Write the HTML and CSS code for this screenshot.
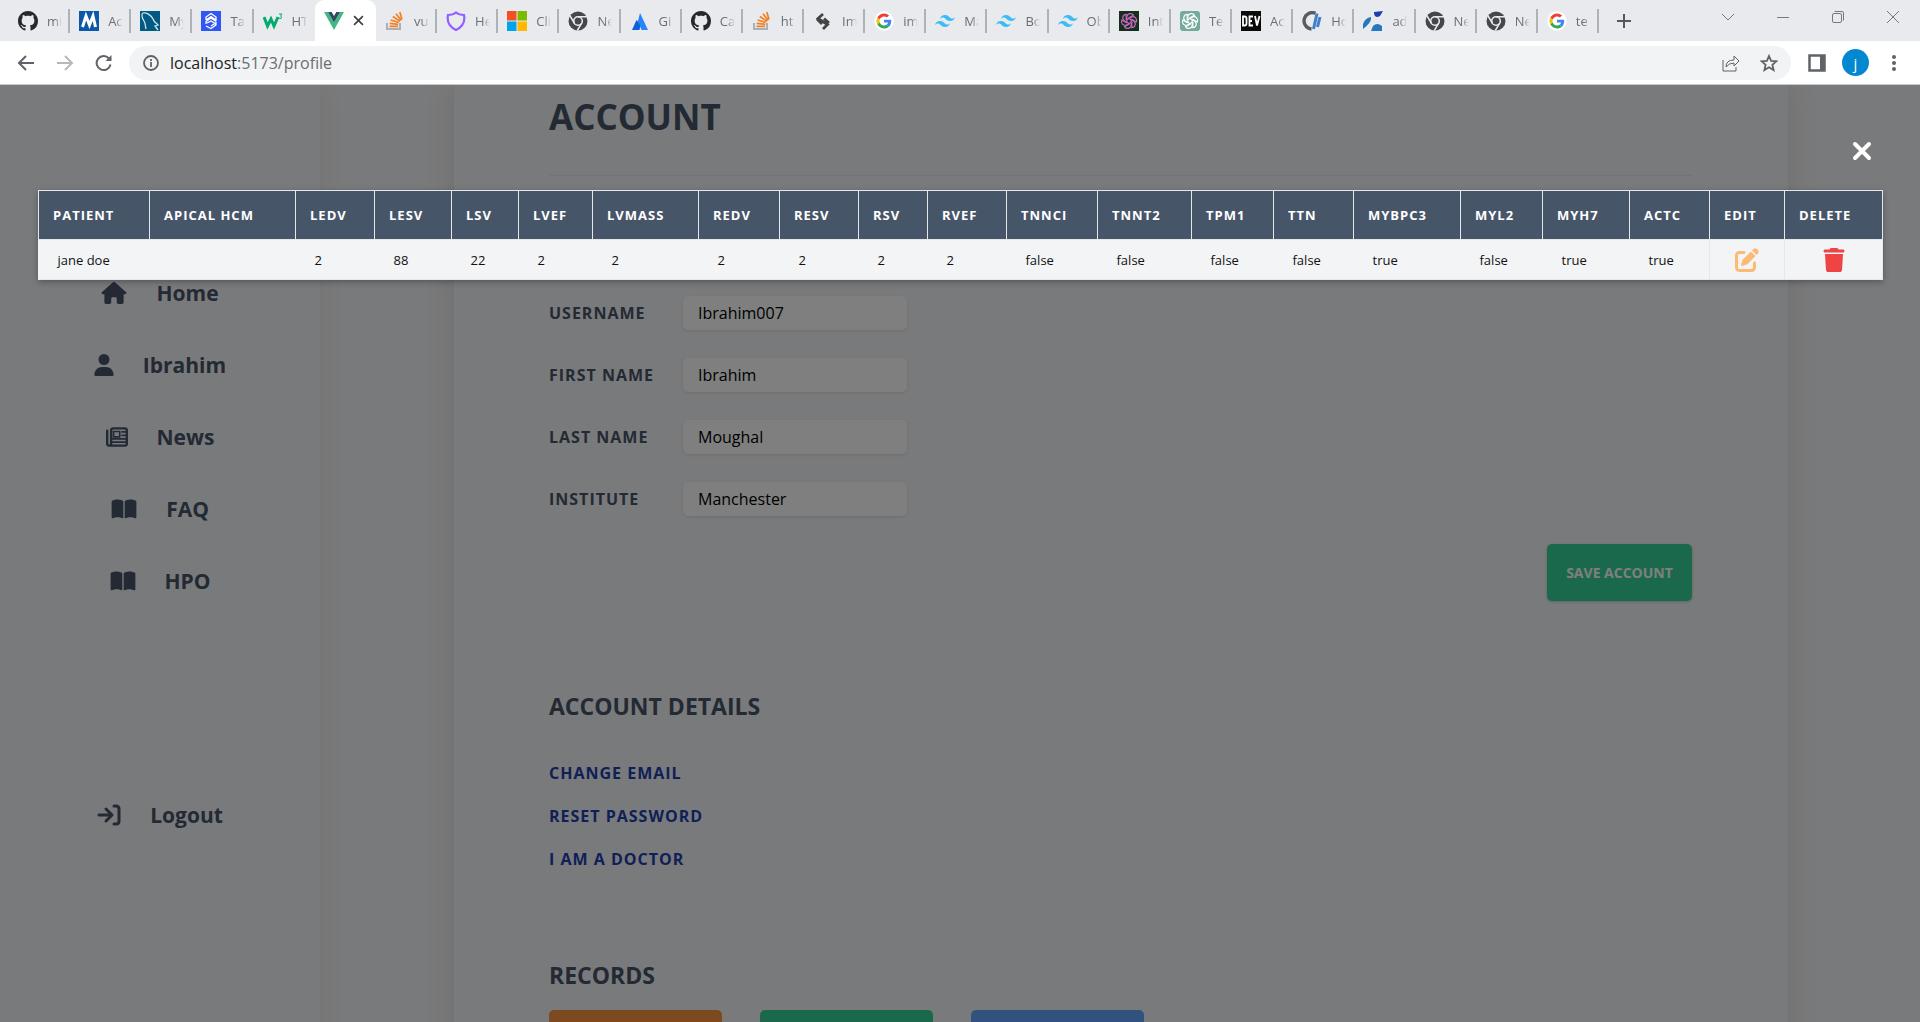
FILE: index.html
```html
<!DOCTYPE html>
<html lang="en">
<head>
<meta charset="utf-8">
<title>Profile</title>
<link rel="stylesheet" href="styles.css">
</head>
<body>
<svg class="sprite" aria-hidden="true">
  <symbol id="github" viewBox="0 0 16 16"><path fill="#24292f" d="M8 0C3.58 0 0 3.58 0 8c0 3.54 2.29 6.53 5.47 7.59.4.07.55-.17.55-.38 0-.19-.01-.82-.01-1.49-2.01.37-2.53-.49-2.69-.94-.09-.23-.48-.94-.82-1.13-.28-.15-.68-.52-.01-.53.63-.01 1.08.58 1.23.82.72 1.21 1.87.87 2.33.66.07-.52.28-.87.51-1.07-1.78-.2-3.64-.89-3.64-3.95 0-.87.31-1.59.82-2.15-.08-.2-.36-1.02.08-2.12 0 0 .67-.21 2.2.82.64-.18 1.32-.27 2-.27s1.36.09 2 .27c1.53-1.04 2.2-.82 2.2-.82.44 1.1.16 1.92.08 2.12.51.56.82 1.27.82 2.15 0 3.07-1.87 3.75-3.65 3.95.29.25.54.73.54 1.48 0 1.07-.01 1.93-.01 2.2 0 .21.15.46.55.38A8.01 8.01 0 0 0 16 8c0-4.42-3.58-8-8-8z"/></symbol>
  <symbol id="stack" viewBox="0 0 20 20"><path d="M2 12v6h13v-6" fill="none" stroke="#a9b0b6" stroke-width="2"/><g stroke="#f48024" stroke-width="1.7"><path d="M4.5 15.3h8.500M4.700 12.300l8.500 1M5.600 9l8.200 2.500M7.800 5.500l7.200 4.700M11 2.800l5.200 6.600M14.800 1l2.200 7.500"/></g></symbol>
  <symbol id="chrome" viewBox="0 0 20 20"><circle cx="10" cy="10" r="9.500" fill="#45484b"/><circle cx="10" cy="10" r="4.300" fill="none" stroke="#e8eaed" stroke-width="1.600"/><path d="M10 5.700h9M6.300 12.100L1.800 4.500M13.700 12.100L9.300 19.500" stroke="#e8eaed" stroke-width="1.500"/></symbol>
  <symbol id="tailwind" viewBox="0 0 24 24"><path fill="#38bdf8" d="M12 4.800c-3.200 0-5.200 1.600-6 4.800 1.200-1.600 2.600-2.200 4.200-1.800.913.228 1.565.89 2.288 1.624C13.666 10.618 15.027 12 18 12c3.200 0 5.200-1.600 6-4.800-1.200 1.600-2.600 2.200-4.200 1.800-.913-.228-1.565-.89-2.288-1.624C16.337 6.182 14.976 4.800 12 4.800zM6 12c-3.200 0-5.200 1.600-6 4.800 1.200-1.600 2.600-2.200 4.200-1.800.913.228 1.565.89 2.288 1.624C7.666 17.818 9.027 19.200 12 19.200c3.200 0 5.200-1.600 6-4.800-1.200 1.600-2.600 2.200-4.200 1.800-.913-.228-1.565-.89-2.288-1.624C10.337 13.382 8.976 12 6 12z"/></symbol>
  <symbol id="google" viewBox="-8 -8 64 64"><circle cx="24" cy="24" r="31" fill="#fff"/><path fill="#ea4335" d="M24 9.500c3.540 0 6.710 1.220 9.210 3.600l6.850-6.850C35.900 2.380 30.470 0 24 0 14.620 0 6.510 5.380 2.560 13.220l7.980 6.190C12.430 13.720 17.740 9.500 24 9.500z"/><path fill="#4285f4" d="M46.980 24.550c0-1.570-.15-3.090-.38-4.550H24v9.020h12.940c-.58 2.960-2.260 5.480-4.780 7.180l7.730 6c4.510-4.180 7.090-10.360 7.090-17.650z"/><path fill="#fbbc05" d="M10.530 28.590c-.48-1.450-.76-2.990-.76-4.590s.27-3.140.76-4.590l-7.980-6.190C.92 16.460 0 20.120 0 24c0 3.880.92 7.540 2.560 10.780l7.970-6.190z"/><path fill="#34a853" d="M24 48c6.480 0 11.930-2.130 15.890-5.810l-7.730-6c-2.150 1.450-4.920 2.300-8.160 2.300-6.260 0-11.570-4.220-13.470-9.910l-7.980 6.190C6.510 42.620 14.620 48 24 48z"/></symbol>
  <symbol id="knot" viewBox="-10 -10 20 20"><g fill="none" stroke="currentColor" stroke-width="1.200"><path id="k" d="M-2.200 1.300V-4.200A3.600 3.600 0 0 1 4.400 -5.800L-.5 -3"/><use href="#k" transform="rotate(60)"/><use href="#k" transform="rotate(120)"/><use href="#k" transform="rotate(180)"/><use href="#k" transform="rotate(240)"/><use href="#k" transform="rotate(300)"/></g></symbol>
  <symbol id="book" viewBox="0 0 576 512"><path fill="currentColor" d="M249.600 471.500c10.800 3.800 22.400-4.100 22.400-15.500V78.600c0-4.200-1.600-8.400-5-11C247.400 52 202.400 32 144 32 93.500 32 46.300 45.300 18.100 56.100 6.800 60.500 0 71.700 0 83.800v370.300c0 11.900 12.800 20.200 24.100 16.500C55.600 460.100 105.500 448 144 448c33.900 0 79 14 105.600 23.500zm76.800 0C353 462 398.100 448 432 448c38.500 0 88.400 12.100 119.900 22.600 11.300 3.800 24.100-4.600 24.100-16.500V83.800c0-12.100-6.800-23.300-18.100-27.600C529.700 45.300 482.500 32 432 32c-58.400 0-103.400 20-123 35.600-3.300 2.600-5 6.800-5 11V456c0 11.400 11.700 19.300 22.400 15.500z"/></symbol>
</svg>

<header class="browser">
  <div class="tabstrip">
    <div class="tabs" role="tablist">
      <button class="tab" role="tab"><svg class="fav"><use href="#github"/></svg><span>mi</span></button>
      <button class="tab" role="tab"><svg class="fav" viewBox="0 0 20 20"><path fill="#0b57a8" d="M0 0h20v20H0z"/><path d="M3.500 16L7 5l3.500 9L14 5l2.500 11" fill="none" stroke="#fff" stroke-width="3"/></svg><span>Ac</span></button>
      <button class="tab" role="tab"><svg class="fav" viewBox="0 0 20 20"><path fill="#015a84" d="M0 0h20v20H0z"/><path d="M6 18c-1-3 0-5-2-8S1 3 3 2c3-1 8 2 10 6 1 3 3 4 5 6l-3 1 3 4" fill="none" stroke="#d3e3ea" stroke-width="1.300"/></svg><span>My</span></button>
      <button class="tab" role="tab"><svg class="fav" viewBox="0 0 20 20"><path fill="#3056f5" d="M0 0h20v20H0z"/><path d="M5 9V6l5-3.500L15 6v3l-5-3.500L5 9M5 13v-2.500L10 7l5 3.500M15 11v3l-5 3.500L5 15M6 12l4-2 4 2.500-4 2.500" fill="none" stroke="#fff" stroke-width="1.300"/></svg><span>Ta</span></button>
      <button class="tab tab-before" role="tab"><svg class="fav" viewBox="0 0 20 20"><path d="M1 6l3.500 9L8 8l3 7 4-9" fill="none" stroke="#04aa6d" stroke-width="3"/><path d="M16 3h3l-1.500 2Q19.500 6 18 7.500l-2-.3" fill="none" stroke="#04aa6d"/></svg><span>HT</span></button>
      <button class="tab active" role="tab" aria-selected="true"><svg class="fav" viewBox="0 0 20 20"><path fill="#41b883" d="M0 1h4l6 10.500L16 1h4L10 19z"/><path fill="#34495e" d="M4 1h3.700L10 5l2.300-4H16L10 11.500z"/></svg><svg class="tab-close" viewBox="0 0 10 10"><path d="M1 1l8 8M9 1L1 9" stroke="#3c4043" stroke-width="1.500"/></svg></button>
      <button class="tab" role="tab"><svg class="fav"><use href="#stack"/></svg><span>vu</span></button>
      <button class="tab" role="tab"><svg class="fav" viewBox="0 0 20 20"><path d="M10 1.500q3 2.500 8 2.500 2 10-8 15Q0 14 2 4q5 0 8-2.500z" fill="none" stroke="#9360ff" stroke-width="2.200"/></svg><span>He</span></button>
      <button class="tab" role="tab"><svg class="fav" viewBox="0 0 20 20"><path fill="#f25022" d="M0 0h9.500v9.500H0z"/><path fill="#7fba00" d="M10.500 0H20v9.500h-9.500z"/><path fill="#00a4ef" d="M0 10.500h9.500V20H0z"/><path fill="#ffb900" d="M10.500 10.500H20V20h-9.500z"/></svg><span>Cli</span></button>
      <button class="tab" role="tab"><svg class="fav"><use href="#chrome"/></svg><span>Ne</span></button>
      <button class="tab" role="tab"><svg class="fav" viewBox="0 0 20 20"><path fill="#2684ff" d="M10 2l8 17h-6.500L8 10z"/><path fill="#0f5fd7" d="M6.500 9q5 4 3 10H2z"/></svg><span>Gi</span></button>
      <button class="tab" role="tab"><svg class="fav"><use href="#github"/></svg><span>Ca</span></button>
      <button class="tab" role="tab"><svg class="fav"><use href="#stack"/></svg><span>ht</span></button>
      <button class="tab" role="tab"><svg class="fav" viewBox="0 0 20 20"><path d="M10 3L5 7.500l9.500 6L10 18M4 8l5 5M11 7.500l5 4.500" fill="none" stroke="#444" stroke-width="2.800"/></svg><span>Im</span></button>
      <button class="tab" role="tab"><svg class="fav"><use href="#google"/></svg><span>im</span></button>
      <button class="tab" role="tab"><svg class="fav"><use href="#tailwind"/></svg><span>Ma</span></button>
      <button class="tab" role="tab"><svg class="fav"><use href="#tailwind"/></svg><span>Bo</span></button>
      <button class="tab" role="tab"><svg class="fav"><use href="#tailwind"/></svg><span>Ob</span></button>
      <button class="tab" role="tab"><svg class="fav fav-dark"><use href="#knot"/></svg><span>Int</span></button>
      <button class="tab" role="tab"><svg class="fav fav-mint"><use href="#knot"/></svg><span>Te</span></button>
      <button class="tab" role="tab"><svg class="fav" viewBox="0 0 20 20"><path fill="#0a0a0a" d="M0 0h20v20H0z"/><path d="M2 5.500v9h1.500q2 0 2-2v-5q0-2-2-2zM12 5.500H8.500v9H12M8.500 10H11M14 5l2 9.500L18.500 5" fill="none" stroke="#fff" stroke-width="1.800"/></svg><span>Ac</span></button>
      <button class="tab" role="tab"><svg class="fav" viewBox="0 0 20 20"><path d="M13.500 2.300A8.200 8.200 0 1 0 9.500 18" fill="none" stroke="#5b5b5f" stroke-width="3.400"/><path d="M15 2.500L11.500 18M18 6l-2.500 10" stroke="#3f7fca" stroke-width="3"/></svg><span>Ho</span></button>
      <button class="tab" role="tab"><svg class="fav" viewBox="0 0 20 20"><path fill="#1d3fae" d="M11 1l9-1-3 5q-6 3-6-4z"/><path fill="#2577be" d="M8 6q1 5-8 12V13q2-6 8-7zM10 15q4-4 9 0v5H8z"/></svg><span>ad</span></button>
      <button class="tab" role="tab"><svg class="fav"><use href="#chrome"/></svg><span>Ne</span></button>
      <button class="tab" role="tab"><svg class="fav"><use href="#chrome"/></svg><span>Ne</span></button>
      <button class="tab" role="tab"><svg class="fav"><use href="#google"/></svg><span>te</span></button>
    </div>
    <div class="window-bar">
      <button class="new-tab" aria-label="New tab"><svg width="14" height="14"><path d="M7 0v14M0 7h14" stroke="#55585c" stroke-width="2"/></svg></button>
      <div class="window-controls">
        <button aria-label="Search tabs"><svg viewBox="0 0 12 12"><path d="M0 3l6 6 6-6"/></svg></button>
        <button aria-label="Minimize"><svg viewBox="0 0 12 12"><path d="M0 6.500h12"/></svg></button>
        <button aria-label="Restore"><svg viewBox="0 0 12 12"><rect x=".5" y="2.500" width="9" height="9" rx="1.500"/><path d="M2.500.5H10q1.500 0 1.500 1.500v7.500"/></svg></button>
        <button aria-label="Close"><svg viewBox="0 0 12 12"><path d="M0 0l12 12M12 0L0 12"/></svg></button>
      </div>
    </div>
  </div>
  <div class="toolbar">
    <div class="nav-buttons">
      <button aria-label="Back"><svg viewBox="0 0 18 18"><path d="M17 9H2M9 2L2 9l7 7"/></svg></button>
      <button class="off" aria-label="Forward"><svg viewBox="0 0 18 18"><path d="M1 9h15M9 2l7 7-7 7"/></svg></button>
      <button aria-label="Reload"><svg viewBox="0 0 18 18"><path d="M15.500 10.500A7 7 0 1 1 14 4.500l1.500 1.500"/><path d="M16.500 1v6h-6z" class="solid"/></svg></button>
    </div>
    <div class="omnibox">
      <svg class="info" viewBox="0 0 16 16"><circle cx="8" cy="8" r="7" fill="none" stroke="#5f6368" stroke-width="1.800"/><path d="M8 7v5M8 4v2" stroke="#5f6368" stroke-width="1.800"/></svg>
      <div class="url"><b>localhost</b>:5173/profile</div>
      <button aria-label="Share"><svg viewBox="0 0 18 18"><path d="M1 6v11h13v-4M4 13q0-7 8-7V2l5 5-5 5V9q-5 0-8 4z"/></svg></button>
      <button aria-label="Bookmark"><svg viewBox="0 0 18 18"><path d="M9 2l2.100 4.900 5.300.4-4 3.500 1.200 5.200L9 13.200 4.400 16l1.200-5.200-4-3.500 5.300-.4z" stroke-width="1.800"/></svg></button>
    </div>
    <div class="tool-end">
      <button aria-label="Side panel"><svg viewBox="0 0 18 18"><path d="M1.500 1.500h15v15h-15z" stroke-width="2.500"/><path class="solid" d="M12 1h5v16h-5z"/></svg></button>
      <button class="avatar">j</button>
      <button aria-label="Menu"><svg viewBox="0 0 18 18"><g class="solid"><circle cx="9" cy="3" r="2"/><circle cx="9" cy="9" r="2"/><circle cx="9" cy="15" r="2"/></g></svg></button>
    </div>
  </div>
</header>

<div class="viewport">
  <div class="page">
    <nav class="sidebar">
      <a href="#"><svg class="w26" viewBox="0 0 576 512"><path fill="currentColor" d="M575.800 255.500c0 18-15 32.100-32 32.100h-32l.7 160.200c0 2.700-.2 5.400-.5 8.100V472c0 22.100-17.900 40-40 40h-80c-22.100 0-40-17.900-40-40v-88c0-17.700-14.300-32-32-32h-64c-17.700 0-32 14.300-32 32v88c0 22.100-17.900 40-40 40h-80c-22.100 0-40-17.900-40-40V287.600H32c-18 0-32-14-32-32.100 0-9 3-17 10-24L266.400 8c7-7 15-8 22-8s15 2 21 7l255.400 224.500c8 7 12 15 11 24z"/></svg>Home</a>
      <a href="#"><svg class="w20" viewBox="0 0 448 512"><path fill="currentColor" d="M224 256a128 128 0 1 0 0-256 128 128 0 1 0 0 256zm-45.700 48C79.800 304 0 383.800 0 482.300 0 498.700 13.300 512 29.700 512h388.600c16.400 0 29.700-13.300 29.700-29.700 0-98.500-79.800-178.300-178.300-178.300h-91.400z"/></svg>Ibrahim</a>
      <a href="#"><svg class="w22" viewBox="0 0 512 512"><g fill="none" stroke="currentColor" stroke-width="56" stroke-linecap="round"><path d="M28 112v296q0 48 48 48h360q48 0 48-48V104q0-48-48-48H168q-48 0-48 48v304q0 48-48 48"/><path d="M176 128h144v124H176zM372 138h80M372 218h80M150 300h310M150 376h310" stroke-width="38"/></g></svg>News</a>
      <a href="#"><svg class="w26"><use href="#book"/></svg>FAQ</a>
      <a href="#"><svg class="w26"><use href="#book"/></svg>HPO</a>
      <a href="#" class="logout"><svg class="w24" viewBox="0 0 24 22"><path d="M2 11h12M9 5l6 6-6 6M17 2h2q3 0 3 3v12q0 3-3 3h-2" fill="none" stroke="currentColor" stroke-width="3" stroke-linecap="round" stroke-linejoin="round"/></svg>Logout</a>
    </nav>
    <main class="card">
      <h1>ACCOUNT</h1>
      <form class="account">
        <label for="user">USERNAME</label><input id="user" value="Ibrahim007">
        <label for="first">FIRST NAME</label><input id="first" value="Ibrahim">
        <label for="last">LAST NAME</label><input id="last" value="Moughal">
        <label for="inst">INSTITUTE</label><input id="inst" value="Manchester">
        <button class="save" type="button">SAVE ACCOUNT</button>
      </form>
      <h2>ACCOUNT DETAILS</h2>
      <div class="links">
        <a href="#">CHANGE EMAIL</a>
        <a href="#">RESET PASSWORD</a>
        <a href="#">I AM A DOCTOR</a>
      </div>
      <h2>RECORDS</h2>
      <div class="records">
        <button class="orange" aria-label="Add record"></button>
        <button class="green" aria-label="View records"></button>
        <button class="blue" aria-label="Export records"></button>
      </div>
    </main>
  </div>

  <div class="overlay" role="dialog" aria-label="Patient records">
    <button class="dismiss" aria-label="Close"><svg viewBox="0 0 20 20"><path d="M3 3l14 14M17 3L3 17" stroke="#fff" stroke-width="4" stroke-linecap="round"/></svg></button>
    <table>
      <colgroup><col class="c111"><col class="c146"><col class="c79"><col class="c77"><col class="c67"><col class="c74"><col class="c106"><col class="c81"><col class="c79"><col class="c69"><col class="c79"><col class="c91"><col class="c94"><col class="c82"><col class="c80"><col class="c107"><col class="c82"><col class="c87"><col class="c80"><col class="c75"><col class="c98"></colgroup>
      <thead><tr><th>PATIENT</th><th>APICAL HCM</th><th>LEDV</th><th>LESV</th><th>LSV</th><th>LVEF</th><th>LVMASS</th><th>REDV</th><th>RESV</th><th>RSV</th><th>RVEF</th><th>TNNCI</th><th>TNNT2</th><th>TPM1</th><th>TTN</th><th>MYBPC3</th><th>MYL2</th><th>MYH7</th><th>ACTC</th><th>EDIT</th><th>DELETE</th></tr></thead>
      <tbody><tr><td>jane doe</td><td></td><td>2</td><td>88</td><td>22</td><td>2</td><td>2</td><td>2</td><td>2</td><td>2</td><td>2</td><td>false</td><td>false</td><td>false</td><td>false</td><td>true</td><td>false</td><td>true</td><td>true</td>
        <td class="action"><button aria-label="Edit"><svg viewBox="0 0 512 512"><path fill="#fdba74" d="M471.600 21.700c-21.900-21.900-57.300-21.900-79.200 0l-30.100 30 97.900 97.900 30.100-30.100c21.900-21.900 21.900-57.300 0-79.200l-18.700-18.600zm-299.200 220c-6.100 6.100-10.800 13.600-13.500 21.900l-29.600 88.800c-2.900 8.600-.6 18.100 5.800 24.600s15.900 8.700 24.600 5.800l88.800-29.600c8.200-2.700 15.700-7.400 21.900-13.500l167.300-167.400-98-98-167.300 167.400zM96 64c-53 0-96 43-96 96v256c0 53 43 96 96 96h256c53 0 96-43 96-96v-96c0-17.700-14.300-32-32-32s-32 14.300-32 32v96c0 17.700-14.300 32-32 32H96c-17.700 0-32-14.300-32-32V160c0-17.700 14.300-32 32-32h96c17.700 0 32-14.300 32-32s-14.300-32-32-32H96z"/></svg></button></td>
        <td class="action"><button aria-label="Delete"><svg viewBox="0 0 448 512"><path fill="#ef4444" d="M135.200 17.700L128 32H32C14.300 32 0 46.300 0 64s14.300 32 32 32h384c17.700 0 32-14.300 32-32s-14.300-32-32-32h-96l-7.200-14.300C307.400 6.800 296.300 0 284.200 0H163.800c-12.100 0-23.200 6.800-28.600 17.700zM416 128H32l21.200 339c1.600 25.300 22.600 45 47.900 45h245.800c25.300 0 46.300-19.700 47.900-45L416 128z"/></svg></button></td></tr></tbody>
    </table>
  </div>
</div>
</body>
</html>
```

FILE: styles.css
```css
* { box-sizing: border-box; }
body {
  margin: 0;
  height: 100vh;
  display: flex;
  flex-direction: column;
  font-family: "Open Sans", "Noto Sans", sans-serif;
  color: #475569;
}
button { border: 0; padding: 0; background: none; font: inherit; color: inherit; }
svg { display: block; flex: none; }
a { color: inherit; text-decoration: none; }
.sprite { position: absolute; width: 0; height: 0; }

/* Browser frame */
.browser { flex: none; border-bottom: 1px solid #c9cacc; background: #fff; }
.tabstrip { display: flex; height: 41px; padding-left: 9px; background: #e8eaed; }
.tabs { flex: 1; display: grid; grid-template-columns: repeat(26, minmax(0, 1fr)); }
.tab {
  display: flex;
  align-items: center;
  gap: 9px;
  padding-left: 9px;
  background: linear-gradient(#aeb1b5, #aeb1b5) right 9px / 2px 24px no-repeat;
  font-size: 13px;
  color: #6b6e72;
  overflow: hidden;
}
.tab span {
  width: 15px;
  overflow: hidden;
  text-align: left;
  mask-image: linear-gradient(90deg, #000 50%, transparent);
}
.fav { width: 20px; height: 20px; }
.fav-dark { background: #14301a; color: #c867c2; }
.fav-mint { background: #74aa9c; color: #fff; border-radius: 3px; }
.tab-before { background: none; }
.tab.active { background: #fff; border-radius: 9px 9px 0 0; }
.tab-close { width: 11px; height: 11px; }
.window-bar { width: 321px; display: flex; justify-content: space-between; padding: 0 21px 0 18px; }
.window-controls { display: flex; gap: 43px; height: 34px; }
.window-controls svg { width: 12px; height: 12px; fill: none; stroke: #77797c; }
.toolbar { display: flex; align-items: center; height: 43px; padding: 0 17px; }
.nav-buttons { display: flex; gap: 21px; width: 112px; }
.toolbar svg { width: 18px; height: 18px; fill: none; stroke: #5f6368; stroke-width: 2; }
.nav-buttons .off { opacity: .45; }
.toolbar .solid { fill: #5f6368; stroke: none; }
.omnibox {
  flex: 1;
  display: flex;
  align-items: center;
  gap: 20px;
  height: 34px;
  padding: 0 13px 0 14px;
  border-radius: 17px;
  background: #f1f3f4;
}
.omnibox button svg { stroke-width: 1; }
.toolbar .info { width: 16px; height: 16px; }
.url { flex: 1; margin-left: -9px; font-size: 16px; color: #6a6e73; }
.url b { font-weight: 400; color: #202124; }
.tool-end { display: flex; align-items: center; gap: 16px; margin-left: 17px; }
.toolbar .avatar { width: 27px; height: 27px; border-radius: 50%; background: #0288d1; color: #fff; font-size: 15px; line-height: 24px; }

/* Profile page */
.viewport { position: relative; flex: 1; min-height: 0; overflow: hidden; background: #f3f4f6; }
.page { display: flex; align-items: stretch; }
.sidebar {
  width: 320px;
  padding-top: 191px;
  display: flex;
  flex-direction: column;
  align-items: center;
  box-shadow: 0 0 24px rgba(70, 50, 0, .07);
}
.sidebar a {
  display: flex;
  align-items: center;
  gap: 29px;
  height: 34px;
  margin-bottom: 38px;
  font-size: 21px;
  font-weight: 700;
}
.sidebar svg { height: 22px; }
.w20 { width: 20px; }
.w22 { width: 22px; }
.w24 { width: 24px; }
.w26 { width: 26px; }
.sidebar .logout { margin-top: 162px; }
.card {
  flex: 1;
  margin: 0 132px 0 134px;
  padding: 7px 96px 40px 95px;
  box-shadow: 0 0 28px rgba(70, 50, 0, .12);
}
h1 { margin: 0 0 120px; padding-bottom: 33px; border-bottom: 1px solid #e5e7eb; font-size: 35px; line-height: 50px; }
h2 { margin: 0; font-size: 23px; line-height: 32px; }
.account {
  display: grid;
  grid-template-columns: 134px 224px 1fr;
  row-gap: 28px;
  align-items: center;
  margin-bottom: 89px;
}
.account label { grid-column: 1; font-size: 16px; font-weight: 700; letter-spacing: 1px; }
.account input {
  grid-column: 2;
  height: 34px;
  width: 100%;
  padding: 0 15px;
  border: 0;
  border-radius: 5px;
  background: #fff;
  box-shadow: 0 1px 3px rgba(0, 0, 0, .1);
  font: 16px "Open Sans", sans-serif;
  color: #000;
}
.save {
  grid-column: 1 / -1;
  justify-self: end;
  width: 145px;
  height: 57px;
  border-radius: 5px;
  box-shadow: 0 1px 3px rgba(0, 0, 0, .2);
  color: #fff;
  font-size: 14px;
  font-weight: 700;
}
.links {
  display: flex;
  flex-direction: column;
  gap: 19px;
  margin: 39px 0 88px;
  font-size: 16px;
  line-height: 24px;
  font-weight: 700;
  letter-spacing: 1px;
  color: #1e40af;
}
.records { display: grid; grid-template-columns: repeat(3, 173px); gap: 38px; margin-top: 19px; }
.records button { height: 57px; border-radius: 5px; }
.orange { background: #fb923c; }
.green, .save { background: #34d399; }
.blue { background: #60a5fa; }

/* Patient dialog */
.overlay {
  position: absolute;
  inset: 0;
  display: flex;
  flex-direction: column;
  padding: 56px 38px;
  background: rgba(0, 0, 0, .5);
}
.dismiss { align-self: flex-end; margin: 0 10px 29px 0; }
.dismiss svg { width: 20px; height: 20px; }
.overlay table {
  width: 100%;
  table-layout: fixed;
  border-collapse: collapse;
  background: #f3f4f6;
  box-shadow: 0 2px 6px rgba(0, 0, 0, .3);
  font-size: 13px;
  color: #111;
}
.overlay th {
  height: 49px;
  padding: 0 0 0 14px;
  border: 1px solid #e5e7eb;
  background: #475569;
  color: #fff;
  text-align: left;
  letter-spacing: 1px;
}
.overlay td { height: 40px; padding: 0 0 0 19px; border-bottom: 1px solid #e5e7eb; }
.overlay .action { padding: 0; border: 1px solid #e5e7eb; }
.action svg { width: 24px; height: 24px; }
.action button { display: block; margin: 0 auto; }
.c67 { width: 67px; }
.c69 { width: 69px; }
.c74 { width: 74px; }
.c75 { width: 75px; }
.c77 { width: 77px; }
.c79 { width: 79px; }
.c80 { width: 80px; }
.c81 { width: 81px; }
.c82 { width: 82px; }
.c87 { width: 87px; }
.c91 { width: 91px; }
.c94 { width: 94px; }
.c98 { width: 98px; }
.c106 { width: 106px; }
.c107 { width: 107px; }
.c111 { width: 111px; }
.c146 { width: 146px; }
```
